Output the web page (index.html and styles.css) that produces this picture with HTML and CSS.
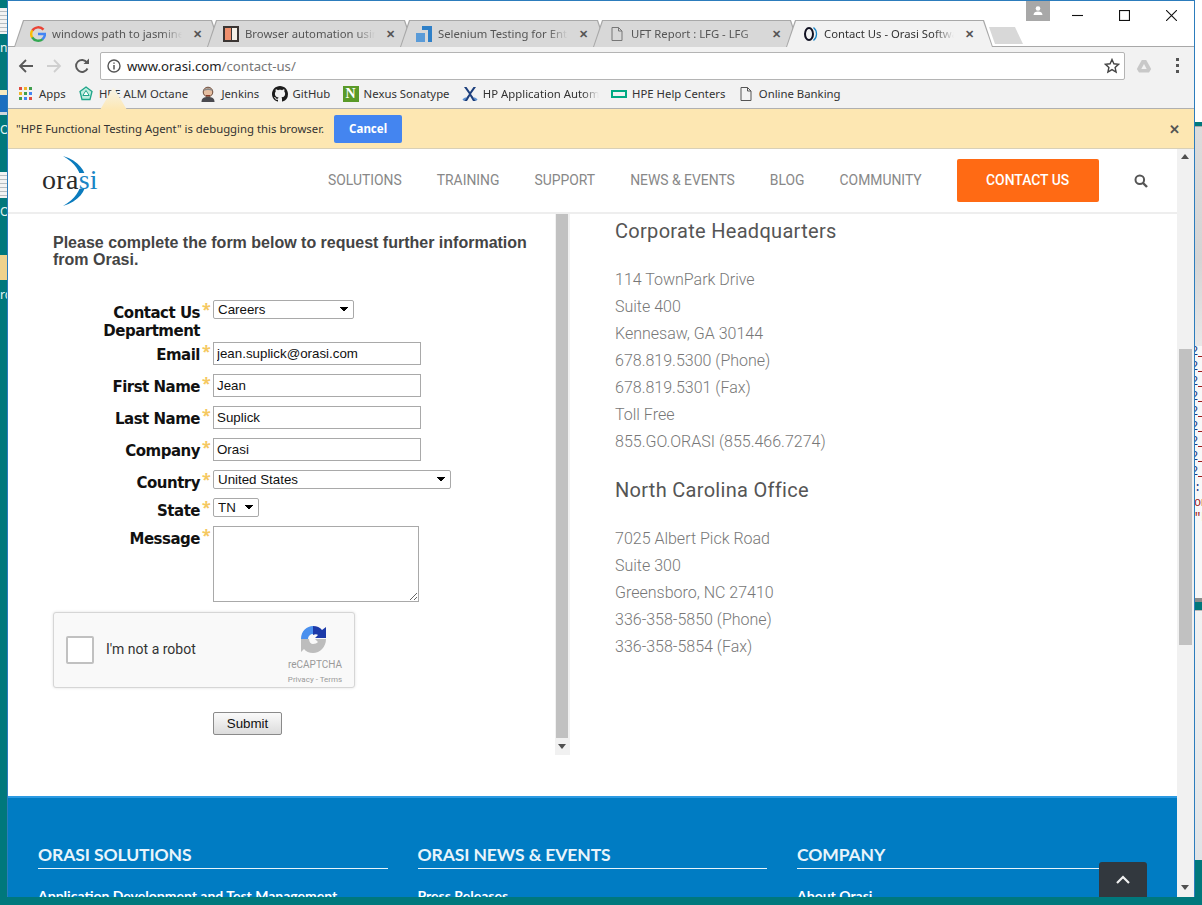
FILE: index.html
```html
<!DOCTYPE html>
<html>
    <head>
        <title>Contact Us - Orasi Software</title>
        <link rel="stylesheet" href="styles.css">
    </head>
    <body>
        <!-- desktop icons peeking out on the left of the browser window -->
        <div class="desk-item desk-doc desk-doc-1"></div>
        <div class="desk-item desk-label desk-label-1">n</div>
        <div class="desk-item desk-blue"></div>
        <div class="desk-item desk-label desk-label-2">Or</div>
        <div class="desk-item desk-doc desk-doc-2"></div>
        <div class="desk-item desk-label desk-label-3">O</div>
        <div class="desk-item desk-folder"></div>
        <div class="desk-item desk-label desk-label-4">rc</div>

        <!-- editor window behind the browser, on the right -->
        <div class="back-window">
            <div class="back-top"></div>
            <div class="back-gap"></div>
            <div class="back-head"></div>
            <div class="back-code">
                <div class="code-line">2<i></i></div>
                <div class="code-line">2<i></i></div>
                <div class="code-line">2<i></i></div>
                <div class="code-line">2<i></i></div>
                <div class="code-line">2<i></i></div>
                <div class="code-line">2<i></i></div>
                <div class="code-line">2<i></i></div>
                <div class="code-line">2<i></i></div>
                <div class="code-line">2<i></i></div>
                <div class="code-text code-blue">: (</div>
                <div class="code-text code-red">om</div>
                <div class="code-text code-red">"F</div>
            </div>
            <div class="back-rule"></div>
            <div class="back-foot"></div>
        </div>

        <div class="window">
            <div class="tabstrip">
                <div class="tab">
                    <svg class="tab-icon" viewBox="0 0 16 16"><path d="M13.500 3.600A7 7 0 0 0 2.300 4.700" fill="none" stroke="#ea4335" stroke-width="2.400"/><path d="M2.300 4.300a7 7 0 0 0 0 7.400" fill="none" stroke="#fbbc05" stroke-width="2.400"/><path d="M2.200 11.300a7 7 0 0 0 10.600 1.800" fill="none" stroke="#34a853" stroke-width="2.400"/><path d="M12.400 13.400A7 7 0 0 0 15 8H8" fill="none" stroke="#4285f4" stroke-width="2.400"/></svg>
                    <span class="tab-title">windows path to jasmine</span>
                    <span class="tab-close">&#10005;</span>
                </div>
                <div class="tab">
                    <svg class="tab-icon" viewBox="0 0 16 16"><rect width="16" height="16" fill="#3b3533"/><rect x="2" y="2" width="6" height="12" fill="#ef8f6d"/><rect x="9" y="2" width="5" height="12" fill="#f6f1e8"/></svg>
                    <span class="tab-title">Browser automation using</span>
                    <span class="tab-close">&#10005;</span>
                </div>
                <div class="tab">
                    <svg class="tab-icon" viewBox="0 0 16 16"><path d="M6 0h10v16h-4V4H6z" fill="#2f80c8"/><rect y="7" width="9" height="9" fill="#5a9bd8"/></svg>
                    <span class="tab-title">Selenium Testing for Enterprise</span>
                    <span class="tab-close">&#10005;</span>
                </div>
                <div class="tab">
                    <svg class="tab-icon" viewBox="0 0 16 16"><path d="M3 1.500h6.500L13 5v9.500H3zM9.500 1.500V5H13" fill="none" stroke="#777"/></svg>
                    <span class="tab-title">UFT Report : LFG - LFG</span>
                    <span class="tab-close">&#10005;</span>
                </div>
                <div class="tab tab-active">
                    <svg class="tab-icon" viewBox="0 0 16 16"><ellipse cx="7" cy="8" rx="4" ry="6" fill="none" stroke="#112" stroke-width="2"/><path d="M11.500 1.500a8.500 8.500 0 0 1 0 13" fill="none" stroke="#1b86c6" stroke-width="1.300"/></svg>
                    <span class="tab-title">Contact Us - Orasi Software</span>
                    <span class="tab-close">&#10005;</span>
                </div>
                <div class="tab-new"></div>
                <div class="profile">
                    <svg viewBox="0 0 12 12" width="12" height="12"><circle cx="6" cy="3.500" r="2.300" fill="#fff"/><path d="M1.500 10c0-2.500 2-3.500 4.500-3.500s4.500 1 4.500 3.500z" fill="#fff"/></svg>
                </div>
                <div class="win-controls">
                    <svg viewBox="0 0 10 10" width="10" height="10"><path d="M0 5h10" stroke="#111"/></svg>
                    <svg viewBox="0 0 10 10" width="10" height="10"><rect x=".5" y=".5" width="9" height="9" fill="none" stroke="#111"/></svg>
                    <svg viewBox="0 0 10 10" width="10" height="10"><path d="M0 0l10 10M10 0L0 10" stroke="#111"/></svg>
                </div>
            </div>

            <div class="toolbar">
                <svg class="tool" viewBox="0 0 16 16"><path d="M15 8H2M8 2L2 8l6 6" fill="none" stroke="#5a5a5a" stroke-width="1.800"/></svg>
                <svg class="tool" viewBox="0 0 16 16"><path d="M1 8h13M8 2l6 6-6 6" fill="none" stroke="#cfcfcf" stroke-width="1.800"/></svg>
                <svg class="tool" viewBox="0 0 16 16"><path d="M13.500 10.500A6 6 0 1 1 13 4.500" fill="none" stroke="#5a5a5a" stroke-width="1.900"/><path d="M9.500 6H15V.500z" fill="#5a5a5a"/></svg>
                <div class="omnibox">
                    <svg class="info-icon" viewBox="0 0 14 14"><circle cx="7" cy="7" r="6" fill="none" stroke="#555" stroke-width="1.400"/><path d="M7 6v4.500M7 3.400v1.400" stroke="#555" stroke-width="1.500"/></svg>
                    <span class="url"><b>www.orasi.com</b>/contact-us/</span>
                    <svg class="star-icon" viewBox="0 0 16 16"><path d="M8 1.500l1.900 4.300 4.600.5-3.400 3.100 1 4.600L8 11.600l-4.100 2.400 1-4.600L1.500 6.300l4.600-.5z" fill="none" stroke="#444" stroke-width="1.400"/></svg>
                </div>
                <svg class="drive-icon" viewBox="0 0 16 16"><path d="M5.800 2h4.400l5 9-2.200 3.500H3L.800 11z" fill="#c8c8c8"/><path d="M8 6l2.700 5H5.300z" fill="#f2f2f2"/></svg>
                <div class="menu-dots"><i></i><i></i><i></i></div>
            </div>

            <div class="bookmarks">
                <div class="bm">
                    <div class="apps-grid"><i class="a"></i><i class="b"></i><i class="c"></i><i class="b"></i><i class="c"></i><i class="d"></i><i class="c"></i><i class="d"></i><i class="a"></i></div>
                    Apps
                </div>
                <div class="bm">
                    <svg class="bm-icon" viewBox="0 0 16 16"><path d="M8 1l6 4.500-2 8H4l-2-8z" fill="#bfeee0" stroke="#1fa58a" stroke-width="1.300"/><path d="M8 4.500l3.200 5H4.800z" fill="#fff" stroke="#1fa58a"/></svg>
                    HPE ALM Octane
                </div>
                <div class="bm">
                    <svg class="bm-icon" viewBox="0 0 16 16"><path d="M1.500 16c0-4 2.500-5 6.500-5s6.500 1 6.500 5z" fill="#4a4a50"/><circle cx="8" cy="6" r="4.800" fill="#e6bfa2" stroke="#6b4a3a"/><path d="M3.500 5C4 1.500 12 1 12.500 5 10 3.500 6 3.500 3.500 5z" fill="#8a8a8a"/><path d="M6 9.500h4" stroke="#8a3a2a"/></svg>
                    Jenkins
                </div>
                <div class="bm">
                    <svg class="bm-icon" viewBox="0 0 16 16"><path d="M8 0C3.580 0 0 3.580 0 8c0 3.540 2.290 6.530 5.470 7.590.4.070.55-.17.55-.38 0-.19-.01-.82-.01-1.490-2.010.37-2.530-.49-2.690-.94-.09-.23-.48-.94-.82-1.130-.28-.15-.68-.52-.01-.53.63-.01 1.080.58 1.230.82.720 1.210 1.870.87 2.330.66.070-.52.280-.87.510-1.070-1.780-.2-3.640-.89-3.640-3.950 0-.87.310-1.590.820-2.150-.08-.2-.36-1.020.08-2.120 0 0 .67-.21 2.200.82.640-.18 1.320-.27 2-.27.68 0 1.360.09 2 .27 1.530-1.040 2.200-.82 2.200-.82.440 1.100.160 1.920.080 2.120.510.560.820 1.270.820 2.150 0 3.070-1.870 3.750-3.650 3.950.290.250.540.730.540 1.480 0 1.070-.01 1.930-.01 2.200 0 .210.150.460.550.380A8.013 8.013 0 0 0 16 8c0-4.420-3.580-8-8-8z" fill="#1b1b1b"/></svg>
                    GitHub
                </div>
                <div class="bm">
                    <span class="nexus">N</span>
                    Nexus Sonatype
                </div>
                <div class="bm">
                    <svg class="bm-icon" viewBox="0 0 16 16"><path d="M2 1l5 7-5 7h3l3-5 3 5h3L9 8l5-7h-2.500L8 6 4.500 1z" fill="#1c3f7c"/><path d="M1 14l3-2M15 14l-3-2" stroke="#5b8fd0" stroke-width="2"/></svg>
                    <span class="bm-cut">HP Application Automation</span>
                </div>
                <div class="bm">
                    <svg class="bm-icon" viewBox="0 0 16 16"><rect x="1" y="5" width="14" height="6" fill="none" stroke="#01a982" stroke-width="2"/></svg>
                    HPE Help Centers
                </div>
                <div class="bm">
                    <svg class="bm-icon" viewBox="0 0 16 16"><path d="M3 1.500h6.500L13 5v9.500H3zM9.500 1.500V5H13" fill="none" stroke="#555"/></svg>
                    Online Banking
                </div>
            </div>

            <!-- pointer of the infobar, it sits on top of the bookmark bar -->
            <div class="infobar-arrow"></div>
            <div class="infobar">
                <span>"HPE Functional Testing Agent" is debugging this browser.</span>
                <button class="cancel-btn">Cancel</button>
                <span class="infobar-close">&#10005;</span>
            </div>

            <div class="viewport">
                <div class="page">
                    <div class="site-header">
                        <div class="logo">
                            <svg class="logo-arc" viewBox="0 0 56 50"><path d="M21 0C37 5 44 15 44 25S37 45 21 50C33 43 39 34 39 25S33 7 21 0z" fill="#0b7bbd"/><rect x="30" y="17" width="20" height="16" fill="#fff"/></svg>
                            <span class="logo-text">ora<em>si</em></span>
                        </div>
                        <div class="site-nav">
                            <a>SOLUTIONS</a>
                            <a>TRAINING</a>
                            <a>SUPPORT</a>
                            <a>NEWS &amp; EVENTS</a>
                            <a>BLOG</a>
                            <a>COMMUNITY</a>
                            <a class="contact-btn">CONTACT US</a>
                            <svg class="search-icon" viewBox="0 0 14 14"><circle cx="5.800" cy="5.800" r="4.300" fill="none" stroke="#555" stroke-width="2"/><path d="M9 9l4 4" stroke="#555" stroke-width="2.400"/></svg>
                        </div>
                    </div>

                    <div class="content">
                        <div class="form-frame">
                            <div class="form-body">
                                <h3 class="form-title">Please complete the form below to request further information from Orasi.</h3>
                                <div class="field field-dept">
                                    <label>Contact Us Department</label><span class="req">*</span>
                                    <select class="sel sel-dept"><option>Careers</option></select>
                                </div>
                                <div class="field">
                                    <label>Email</label><span class="req">*</span>
                                    <input class="txt" type="text" value="jean.suplick@orasi.com">
                                </div>
                                <div class="field">
                                    <label>First Name</label><span class="req">*</span>
                                    <input class="txt" type="text" value="Jean">
                                </div>
                                <div class="field">
                                    <label>Last Name</label><span class="req">*</span>
                                    <input class="txt" type="text" value="Suplick">
                                </div>
                                <div class="field">
                                    <label>Company</label><span class="req">*</span>
                                    <input class="txt" type="text" value="Orasi">
                                </div>
                                <div class="field field-select">
                                    <label>Country</label><span class="req">*</span>
                                    <select class="sel sel-country"><option>United States</option></select>
                                </div>
                                <div class="field field-select">
                                    <label>State</label><span class="req">*</span>
                                    <select class="sel sel-state"><option>TN</option></select>
                                </div>
                                <div class="field field-message">
                                    <label>Message</label><span class="req">*</span>
                                    <textarea class="msg"></textarea>
                                </div>
                                <div class="captcha">
                                    <div class="captcha-box"></div>
                                    <span class="captcha-text">I'm not a robot</span>
                                    <div class="captcha-brand">
                                        <svg class="captcha-logo" viewBox="0 0 32 32" width="32" height="32"><path d="M4 16C4 8 10 3 16 3v8a5 5 0 0 0-5 5z" fill="#4a90ee"/><path d="M16 3c4 0 7 1.500 9 4l4-3v11H18l3-3c-1-1-3-1-5 0z" fill="#1c3aa9"/><path d="M4 16h8c0 3 2 5 4 5s4-1 5-2l-3-3h11c0 8-6 14-13 14-4 0-7-1.500-9-4l-3 3z" fill="#bdbdbd"/></svg>
                                        <span class="captcha-name">reCAPTCHA</span>
                                        <span class="captcha-links">Privacy - Terms</span>
                                    </div>
                                </div>
                                <button class="submit-btn">Submit</button>
                            </div>
                            <div class="frame-scroll">
                                <div class="frame-thumb"></div>
                                <div class="frame-arrow"></div>
                            </div>
                        </div>

                        <div class="offices">
                            <h3>Corporate Headquarters</h3>
                            <p>114 TownPark Drive<br>Suite 400<br>Kennesaw, GA 30144<br>678.819.5300 (Phone)<br>678.819.5301 (Fax)<br>Toll Free<br>855.GO.ORASI (855.466.7274)</p>
                            <h3>North Carolina Office</h3>
                            <p>7025 Albert Pick Road<br>Suite 300<br>Greensboro, NC 27410<br>336-358-5850 (Phone)<br>336-358-5854 (Fax)</p>
                        </div>
                    </div>

                    <div class="site-footer">
                        <div class="foot-col">
                            <h4>ORASI SOLUTIONS</h4>
                            <a>Application Development and Test Management</a>
                        </div>
                        <div class="foot-col">
                            <h4>ORASI NEWS &amp; EVENTS</h4>
                            <a>Press Releases</a>
                        </div>
                        <div class="foot-col">
                            <h4>COMPANY</h4>
                            <a>About Orasi</a>
                        </div>
                    </div>
                    <div class="to-top">
                        <svg viewBox="0 0 16 10" width="16" height="10"><path d="M2 8l6-6 6 6" fill="none" stroke="#f0f0f0" stroke-width="2.200"/></svg>
                    </div>
                </div>

                <div class="page-scroll">
                    <div class="scroll-up"></div>
                    <div class="scroll-thumb"></div>
                    <div class="scroll-down"></div>
                </div>
            </div>
        </div>
    </body>
</html>
```

FILE: styles.css
```css
* {
    box-sizing: border-box;
}
body {
    margin: 0;
    width: 1202px;
    height: 905px;
    position: relative;
    overflow: hidden;
    background-color: #00787c;
    font-family: "Noto Sans", sans-serif;
}

/* desktop bits */
.desk-item {
    position: absolute;
    left: 0;
    width: 7px;
    overflow: hidden;
}
.desk-doc {
    height: 26px;
    background: repeating-linear-gradient(#f2f2f2 0 3px, #b5bcc0 3px 4px);
}
.desk-doc-1 { top: 8px; }
.desk-doc-2 { top: 172px; }
.desk-blue {
    top: 90px;
    height: 25px;
    background: linear-gradient(#f5e9c0 0 5px, #1b6fc0 5px 22px, #cfd6dc 22px);
}
.desk-folder {
    top: 255px;
    height: 25px;
    background-color: #efd28c;
}
.desk-label {
    color: #e8f4f4;
    font-size: 12px;
    line-height: 14px;
    white-space: nowrap;
}
.desk-label-1 { top: 41px; }
.desk-label-2 { top: 123px; }
.desk-label-3 { top: 205px; }
.desk-label-4 { top: 288px; }

/* window behind, only 7px of it shows */
.back-window {
    position: absolute;
    left: 1195px;
    top: 0;
    width: 7px;
    height: 860px;
    display: flex;
    flex-direction: column;
    overflow: hidden;
}
.back-top {
    height: 122px;
    background-color: #fff;
}
.back-gap {
    height: 4px;
    background-color: #00787c;
}
.back-head {
    height: 220px;
    background: linear-gradient(#dcdcdc, #d4d4d4 60%, #e8e8e8);
    border-top: 1px solid #aaa;
}
.back-code {
    height: 252px;
    background-color: #f8f8f8;
    font-family: "Liberation Mono", monospace;
    font-size: 12px;
}
.code-line {
    height: 15px;
    line-height: 13px;
    color: #1a3a8a;
    display: flex;
    margin-left: -4px;
}
.code-line i {
    display: block;
    width: 6px;
    height: 1px;
    margin-top: 10px;
    background-color: #a01818;
}
.code-text {
    height: 15px;
    line-height: 15px;
    margin-left: -1px;
    white-space: nowrap;
}
.code-blue { color: #1a3a8a; }
.code-red { color: #a01818; }
.back-rule {
    height: 4px;
    background-color: #8c8c8c;
}
.back-foot {
    flex: 1;
    background: linear-gradient(#f2f2f2, #dfe3e6);
    border-top: 1px solid #bbb;
    margin-top: 8px;
}

/* browser */
.window {
    position: absolute;
    left: 7px;
    top: 0;
    width: 1188px;
    height: 897px;
    border: 1px solid #2c7cbc;
    border-bottom: none;
    background-color: #fff;
    display: flex;
    flex-direction: column;
    overflow: hidden;
}
.tabstrip {
    height: 46px;
    flex: none;
    padding-top: 19px;
    padding-left: 6px;
    display: flex;
    position: relative;
    background-color: #fff;
    border-bottom: 1px solid #a8a8a8;
}
.tab {
    position: relative;
    width: 207px;
    height: 27px;
    margin-right: -14px;
    padding: 0 19px 0 16px;
    display: flex;
    align-items: center;
    font-size: 11.300px;
    color: #555;
    background-color: #a8a8a8;
    clip-path: polygon(0 100%, 9px 0, 198px 0, 100% 100%);
}
.tab::before {
    content: "";
    position: absolute;
    top: 1px;
    left: 1px;
    right: 1px;
    bottom: 0;
    background-color: #d8d8d8;
    clip-path: polygon(0 100%, 9px 0, 196px 0, 100% 100%);
}
.tab > * {
    position: relative;
}
.tab-active {
    z-index: 2;
    color: #333;
}
.tab-active::before {
    background-color: #f2f2f2;
}
.tab-icon {
    width: 16px;
    height: 16px;
    flex: none;
    margin-right: 6px;
}
.tab-title {
    flex: 1;
    min-width: 0;
    white-space: nowrap;
    overflow: hidden;
    -webkit-mask-image: linear-gradient(to right, #000 110px, transparent 130px);
    mask-image: linear-gradient(to right, #000 110px, transparent 130px);
}
.tab-close {
    flex: none;
    font-size: 11px;
    font-weight: bold;
    color: #555;
    margin-left: 6px;
}
.tab-new {
    position: absolute;
    left: 981px;
    top: 26px;
    width: 34px;
    height: 17px;
    background-color: #d8d8d8;
    clip-path: polygon(6px 100%, 0 0, 26px 0, 100% 100%);
}
.profile {
    position: absolute;
    left: 1018px;
    top: 0;
    width: 24px;
    height: 20px;
    background-color: #a8a8a8;
    display: flex;
    align-items: center;
    justify-content: center;
}
.win-controls {
    position: absolute;
    right: 17px;
    top: 9px;
    display: flex;
    gap: 36px;
}
.win-controls svg {
    width: 11px;
    height: 11px;
}
.toolbar {
    height: 37px;
    flex: none;
    background-color: #f2f2f2;
    display: flex;
    align-items: center;
    padding-left: 10px;
}
.tool {
    width: 16px;
    height: 16px;
    margin-right: 12px;
    flex: none;
}
.toolbar .tool:nth-child(3) {
    margin-right: 10px;
}
.omnibox {
    width: 1025px;
    height: 28px;
    background-color: #fff;
    border: 1px solid #b4b4b4;
    border-radius: 2px;
    display: flex;
    align-items: center;
    padding: 0 4px 0 6px;
    flex: none;
}
.info-icon {
    width: 14px;
    height: 14px;
    margin-right: 6px;
    flex: none;
}
.url {
    flex: 1;
    font-size: 13.200px;
    color: #777;
}
.url b {
    font-weight: normal;
    color: #222;
}
.star-icon {
    width: 16px;
    height: 16px;
}
.drive-icon {
    width: 16px;
    height: 16px;
    margin-left: 11px;
}
.menu-dots {
    margin-left: 24px;
    display: flex;
    flex-direction: column;
    gap: 3px;
}
.menu-dots i {
    display: block;
    width: 3px;
    height: 3px;
    background-color: #555;
}
.bookmarks {
    height: 25px;
    flex: none;
    background-color: #f2f2f2;
    border-bottom: 1px solid #b0b0b0;
    display: flex;
    align-items: center;
    padding-left: 11px;
    padding-bottom: 5px;
    font-size: 11.350px;
    color: #333;
    white-space: nowrap;
}
.bm {
    display: flex;
    align-items: center;
    gap: 5px;
    margin-right: 12.300px;
}
.bm-icon {
    width: 16px;
    height: 16px;
    flex: none;
}
.apps-grid {
    width: 14px;
    height: 14px;
    display: grid;
    grid-template-columns: repeat(3, 3px);
    grid-auto-rows: 3px;
    gap: 2px;
    margin-right: 1px;
}
.apps-grid .a { background-color: #e04a3f; }
.apps-grid .b { background-color: #f0b429; }
.apps-grid .c { background-color: #3f9e4d; }
.apps-grid .d { background-color: #4285f4; }
.nexus {
    width: 16px;
    height: 16px;
    flex: none;
    background-color: #5a9a28;
    color: #fff;
    font-family: "Liberation Serif", serif;
    font-size: 14px;
    font-weight: bold;
    line-height: 16px;
    text-align: center;
}
.bm-cut {
    width: 116px;
    overflow: hidden;
    -webkit-mask-image: linear-gradient(to right, #000 100px, transparent);
    mask-image: linear-gradient(to right, #000 100px, transparent);
}
.infobar-arrow {
    position: absolute;
    left: 92px;
    top: 86px;
    width: 27px;
    height: 23px;
    background: linear-gradient(#f6f4ea, #fde7b2);
    clip-path: polygon(50% 0, 100% 100%, 0 100%);
    z-index: 3;
}
.infobar {
    height: 40px;
    flex: none;
    background-color: #fde7b2;
    border-bottom: 1px solid #d8d0b8;
    display: flex;
    align-items: center;
    padding-left: 8px;
    font-size: 11.350px;
    color: #333;
}
.cancel-btn {
    margin-left: 10px;
    width: 68px;
    height: 28px;
    border: none;
    border-radius: 2px;
    background-color: #4485f0;
    color: #fff;
    font-family: "Noto Sans", sans-serif;
    font-size: 11.500px;
    font-weight: bold;
}
.infobar-close {
    margin-left: auto;
    margin-right: 14px;
    font-size: 13px;
    font-weight: bold;
    color: #555;
}
.viewport {
    flex: 1;
    min-height: 0;
    display: flex;
}
.page {
    flex: 1;
    min-width: 0;
    position: relative;
    display: flex;
    flex-direction: column;
    overflow: hidden;
}
.page-scroll {
    width: 17px;
    flex: none;
    background-color: #f1f1f1;
    padding: 0 2px;
    display: flex;
    flex-direction: column;
}
.scroll-up {
    width: 0;
    height: 0;
    margin: 5px 0 0 2px;
    border-left: 4px solid transparent;
    border-right: 4px solid transparent;
    border-bottom: 5px solid #505050;
}
.scroll-thumb {
    width: 13px;
    height: 296px;
    margin-top: 190px;
    background-color: #c1c1c1;
}
.scroll-down {
    width: 0;
    height: 0;
    margin: 240px 0 0 2px;
    border-left: 4px solid transparent;
    border-right: 4px solid transparent;
    border-top: 5px solid #505050;
}

/* site */
.site-header {
    height: 65px;
    flex: none;
    border-bottom: 2px solid #eee;
    display: flex;
    align-items: center;
    padding-left: 34px;
}
.logo {
    position: relative;
    width: 56px;
    height: 50px;
}
.logo-arc {
    position: absolute;
    left: 0;
    top: 0;
    width: 56px;
    height: 50px;
}
.logo-text {
    position: absolute;
    left: 0;
    top: 8px;
    font-family: "Liberation Serif", serif;
    font-size: 28px;
    letter-spacing: .3px;
    line-height: 32px;
    color: #2a2a2a;
}
.logo-text em {
    font-style: normal;
    color: #1b86c6;
}
.site-nav {
    margin-left: 230px;
    display: flex;
    align-items: center;
    gap: 35px;
    font-family: Roboto, sans-serif;
    font-size: 13.900px;
    color: #888;
}
.site-nav a {
    padding-bottom: 2px;
}
.site-nav .contact-btn {
    width: 142px;
    height: 43px;
    padding-bottom: 0;
    background-color: #ff6a14;
    border-radius: 2px;
    color: #fff;
    font-weight: 500;
    line-height: 42px;
    text-align: center;
}
.search-icon {
    width: 14px;
    height: 14px;
}
.content {
    height: 582px;
    flex: none;
    display: flex;
}
.form-frame {
    width: 562px;
    height: 541px;
    flex: none;
    display: flex;
}
.form-body {
    flex: 1;
    padding: 20px 0 0 45px;
    color: #111;
}
.form-title {
    margin: 0 0 32px;
    width: 480px;
    font-family: "Liberation Sans", sans-serif;
    font-size: 16px;
    font-weight: bold;
    line-height: 17px;
    color: #444;
}
.field {
    display: flex;
    align-items: flex-start;
    height: 32px;
}
.field-dept { height: 42px; }
.field-select { height: 28px; }
.field-message { height: 86px; }
.field label {
    width: 147px;
    padding-top: 4px;
    text-align: right;
    font-family: "DejaVu Sans", sans-serif;
    font-size: 15px;
    font-weight: bold;
    letter-spacing: -.5px;
    line-height: 18px;
}
.field-dept label {
    padding-left: 30px;
}
.req {
    width: 13px;
    padding-left: 2px;
    color: #f5c860;
    font-size: 16px;
    font-weight: bold;
    line-height: 18px;
}
.txt {
    width: 208px;
    height: 23px;
    padding: 0 3px;
    border: 1px solid #a9a9a9;
    border-radius: 0;
    font-family: "Liberation Sans", sans-serif;
    font-size: 13.333px;
    color: #111;
}
.sel {
    height: 19px;
    padding: 0 0 0 4px;
    border: 1px solid #a9a9a9;
    border-radius: 2px;
    font-family: "Liberation Sans", sans-serif;
    font-size: 13.333px;
    color: #111;
    -webkit-appearance: none;
    appearance: none;
    background-color: #fff;
    /* small black triangle for the dropdown arrow */
    background-image: linear-gradient(45deg, transparent 50%, #000 50%), linear-gradient(-45deg, transparent 50%, #000 50%);
    background-size: 4px 5px, 4px 5px;
    background-repeat: no-repeat;
    background-position: right 9px top 6px, right 5px top 6px;
}
.sel-dept { width: 141px; }
.sel-country { width: 238px; }
.sel-state { width: 46px; }
.msg {
    width: 206px;
    height: 76px;
    border: 1px solid #a9a9a9;
    border-radius: 0;
}
.captcha {
    width: 302px;
    height: 76px;
    margin-top: 0;
    background-color: #f9f9f9;
    border: 1px solid #d6d6d6;
    border-radius: 3px;
    box-shadow: 0 0 3px rgba(0, 0, 0, .12);
    display: flex;
    align-items: center;
    padding-left: 12px;
    color: #333;
}
.captcha-box {
    width: 28px;
    height: 28px;
    background-color: #fff;
    border: 2px solid #c1c1c1;
    border-radius: 2px;
    margin-right: 12px;
}
.captcha-text {
    font-family: Roboto, sans-serif;
    font-size: 14px;
    padding-bottom: 2px;
}
.captcha-brand {
    margin-left: auto;
    width: 54px;
    margin-right: 12px;
    display: flex;
    flex-direction: column;
    align-items: center;
    margin-top: 8px;
    font-family: Roboto, sans-serif;
    color: #9a9a9a;
}
.captcha-logo {
    margin-right: 4px;
}
.captcha-name {
    font-size: 10px;
    line-height: 12px;
    margin-top: 4px;
}
.captcha-links {
    font-size: 8px;
    line-height: 12px;
    margin-top: 3px;
    white-space: nowrap;
}
.submit-btn {
    display: block;
    margin: 24px 0 0 160px;
    width: 69px;
    height: 23px;
    padding: 0;
    border: 1px solid #8a8a8a;
    border-radius: 2px;
    background: linear-gradient(#fafafa, #dcdcdc);
    font-family: "Liberation Sans", sans-serif;
    font-size: 13.333px;
    color: #111;
}
.frame-scroll {
    width: 15px;
    flex: none;
    background-color: #f1f1f1;
    padding: 0 1px;
}
.frame-thumb {
    width: 12px;
    height: 524px;
    background-color: #c1c1c1;
}
.frame-arrow {
    width: 0;
    height: 0;
    margin: 6px 0 0 2px;
    border-left: 4px solid transparent;
    border-right: 4px solid transparent;
    border-top: 5px solid #505050;
}
.offices {
    margin-left: 45px;
    padding-top: 1px;
    font-family: Roboto, sans-serif;
    font-weight: 300;
    color: #777;
    font-size: 16px;
    line-height: 27px;
}
.offices h3 {
    margin: 3px 0 21px;
    font-size: 20px;
    font-weight: normal;
    letter-spacing: .3px;
    line-height: 27px;
    color: #555;
}
.offices p {
    margin: 0 0 22px;
}
.site-footer {
    flex: 1;
    background-color: #007cc3;
    border-top: 2px solid #2b9ae2;
    display: flex;
    gap: 30px;
    padding: 46px 30px 0;
    font-family: Lato, sans-serif;
    color: #fff;
}
.foot-col {
    width: 349.500px;
}
.foot-col h4 {
    margin: 0 0 16px;
    padding-bottom: 2px;
    border-bottom: 1px solid #e8f4fb;
    font-size: 17.500px;
    font-weight: bold;
    letter-spacing: -.1px;
    line-height: 22px;
    color: #e8f4fb;
}
.foot-col a {
    font-size: 14px;
    font-weight: bold;
}
.to-top {
    position: absolute;
    right: 30px;
    bottom: 0;
    width: 48px;
    height: 35px;
    background-color: #32383e;
    border-radius: 3px 3px 0 0;
    display: flex;
    align-items: center;
    justify-content: center;
}
```
